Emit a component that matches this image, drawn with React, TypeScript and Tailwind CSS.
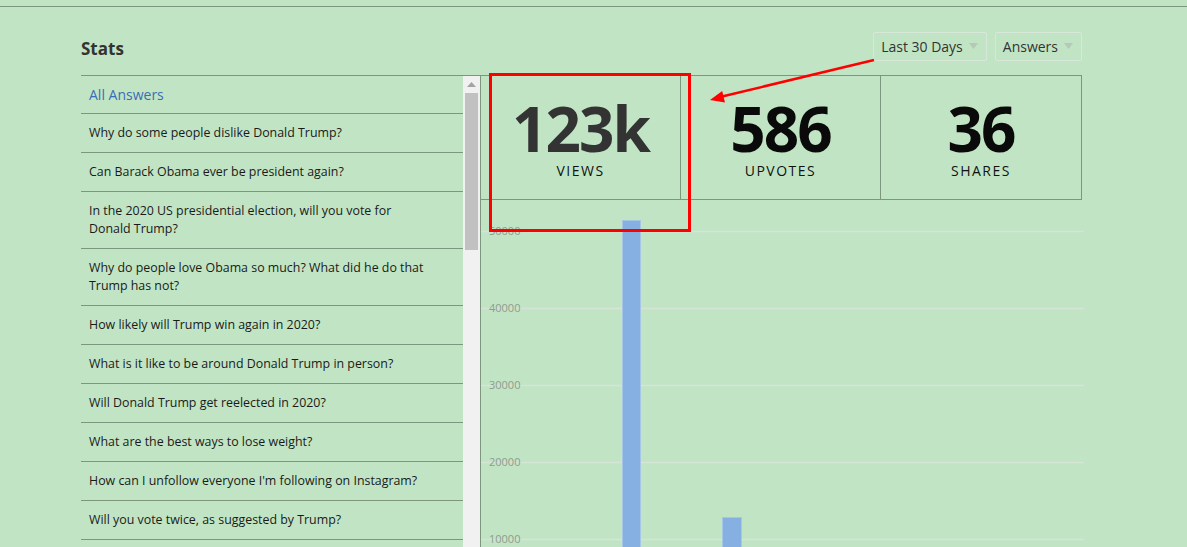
import React from 'react'

const questions = [
  'Why do some people dislike Donald Trump?',
  'Can Barack Obama ever be president again?',
  'In the 2020 US presidential election, will you vote for Donald Trump?',
  'Why do people love Obama so much? What did he do that Trump has not?',
  'How likely will Trump win again in 2020?',
  'What is it like to be around Donald Trump in person?',
  'Will Donald Trump get reelected in 2020?',
  'What are the best ways to lose weight?',
  "How can I unfollow everyone I'm following on Instagram?",
  'Will you vote twice, as suggested by Trump?',
  'What do you think of Donald Trump?',
]

const stats = [
  { value: '123k', label: 'Views', color: 'text-[#333333]' },
  { value: '586', label: 'Upvotes', color: 'text-[#0a0a0a]' },
  { value: '36', label: 'Shares', color: 'text-[#0a0a0a]' },
]

const font = { fontFamily: '"Open Sans", "Noto Sans", sans-serif' }

function Dropdown({ label }: { label: string }) {
  return (
    <div className="flex items-center h-[29px] pl-[7px] pr-[8px] gap-[6px] border border-[#d7e8d8] rounded-[2px] text-[14px] text-[#333333]">
      <span>{label}</span>
      <svg width="9" height="7" viewBox="0 0 9 7"><polygon points="0,0 9,0 4.5,6" fill="#b5c9b6" /></svg>
    </div>
  )
}

function Chart() {
  const grid = [
    { y: 31, label: '50000' },
    { y: 108, label: '40000' },
    { y: 185, label: '30000' },
    { y: 262, label: '20000' },
    { y: 339, label: '10000' },
  ]
  return (
    <svg width="601" height="348" className="block overflow-visible" style={font}>
      {grid.map((g) => (
        <g key={g.label}>
          <line x1="0" x2="603" y1={g.y + 0.5} y2={g.y + 0.5} stroke="#d6e4d6" strokeWidth="1.5" />
          <text x="8" y={g.y + 4} fontSize="11" fill="#8d9c8e">{g.label}</text>
        </g>
      ))}
      <rect x="141.5" y="20.5" width="18" height="340" fill="#87b0e2" stroke="#a6c6e6" />
      <rect x="241.5" y="317.5" width="19" height="60" fill="#87b0e2" stroke="#a6c6e6" />
    </svg>
  )
}

export default function App() {
  return (
    <div className="relative w-full h-[547px] overflow-hidden bg-[#c1e5c4]" style={font}>
      <div className="h-[6px]" />
      <div className="h-px bg-[#7c977e]" />

      <div className="ml-[81px] w-[1001px]">
        <div className="h-[68px] pt-[10px] flex items-center justify-between">
          <h1 className="mt-[6px] text-[17px] font-bold text-[#333333]">Stats</h1>
          <div className="flex gap-[8px]">
            <Dropdown label="Last 30 Days" />
            <Dropdown label="Answers" />
          </div>
        </div>

        <div className="flex border-t border-[#7c977e]">
          <div className="w-[399px] flex shrink-0">
            <div className="flex-1 min-w-0">
              <div className="h-[38px] flex items-center pl-[8px] border-b border-[#7c977e] text-[14px] text-[#3a6db5]">All Answers</div>
              {questions.map((q) => (
                <div key={q} className="flex items-center pl-[8px] pr-[30px] py-[10px] border-b border-[#7c977e] text-[12.4px] leading-[18px] text-[#1a1a1a]">
                  {q}
                </div>
              ))}
            </div>
            <div className="w-[17px] shrink-0 bg-[#f1f1f1] flex flex-col items-center">
              <svg width="9" height="6" viewBox="0 0 9 6" className="mt-[6px]"><polygon points="4.5,0 9,5 0,5" fill="#a3a3a3" /></svg>
              <div className="mt-[5px] w-[13px] h-[157px] bg-[#c1c1c1]" />
            </div>
          </div>

          <div className="flex-1 min-w-0 border-l border-[#7c977e]">
            <div className="grid grid-cols-3 border-b border-r border-[#7c977e] h-[124px]">
              {stats.map((s, i) => (
                <div key={s.label} className={`flex flex-col items-center pt-[23px] ${i < 2 ? 'border-r border-[#7c977e]' : ''}`}>
                  <div className={`text-[62px] leading-[58px] font-bold tracking-[-2px] ${s.color}`}>{s.value}</div>
                  <div className="mt-[5px] text-[14px] leading-[18px] uppercase tracking-[1.5px] text-[#111111]">{s.label}</div>
                </div>
              ))}
            </div>
            <Chart />
          </div>
        </div>
      </div>

      <div className="absolute left-[489px] top-[73px] w-[202px] h-[159px] border-[3px] border-[#ff0000]" />
      <svg className="absolute left-0 top-0 pointer-events-none" width="1187" height="547">
        <line x1="874" y1="60" x2="720" y2="97" stroke="#ff0000" strokeWidth="2.5" />
        <polygon points="710,100 725,102.5 722.2,90.9" fill="#ff0000" />
      </svg>
    </div>
  )
}
